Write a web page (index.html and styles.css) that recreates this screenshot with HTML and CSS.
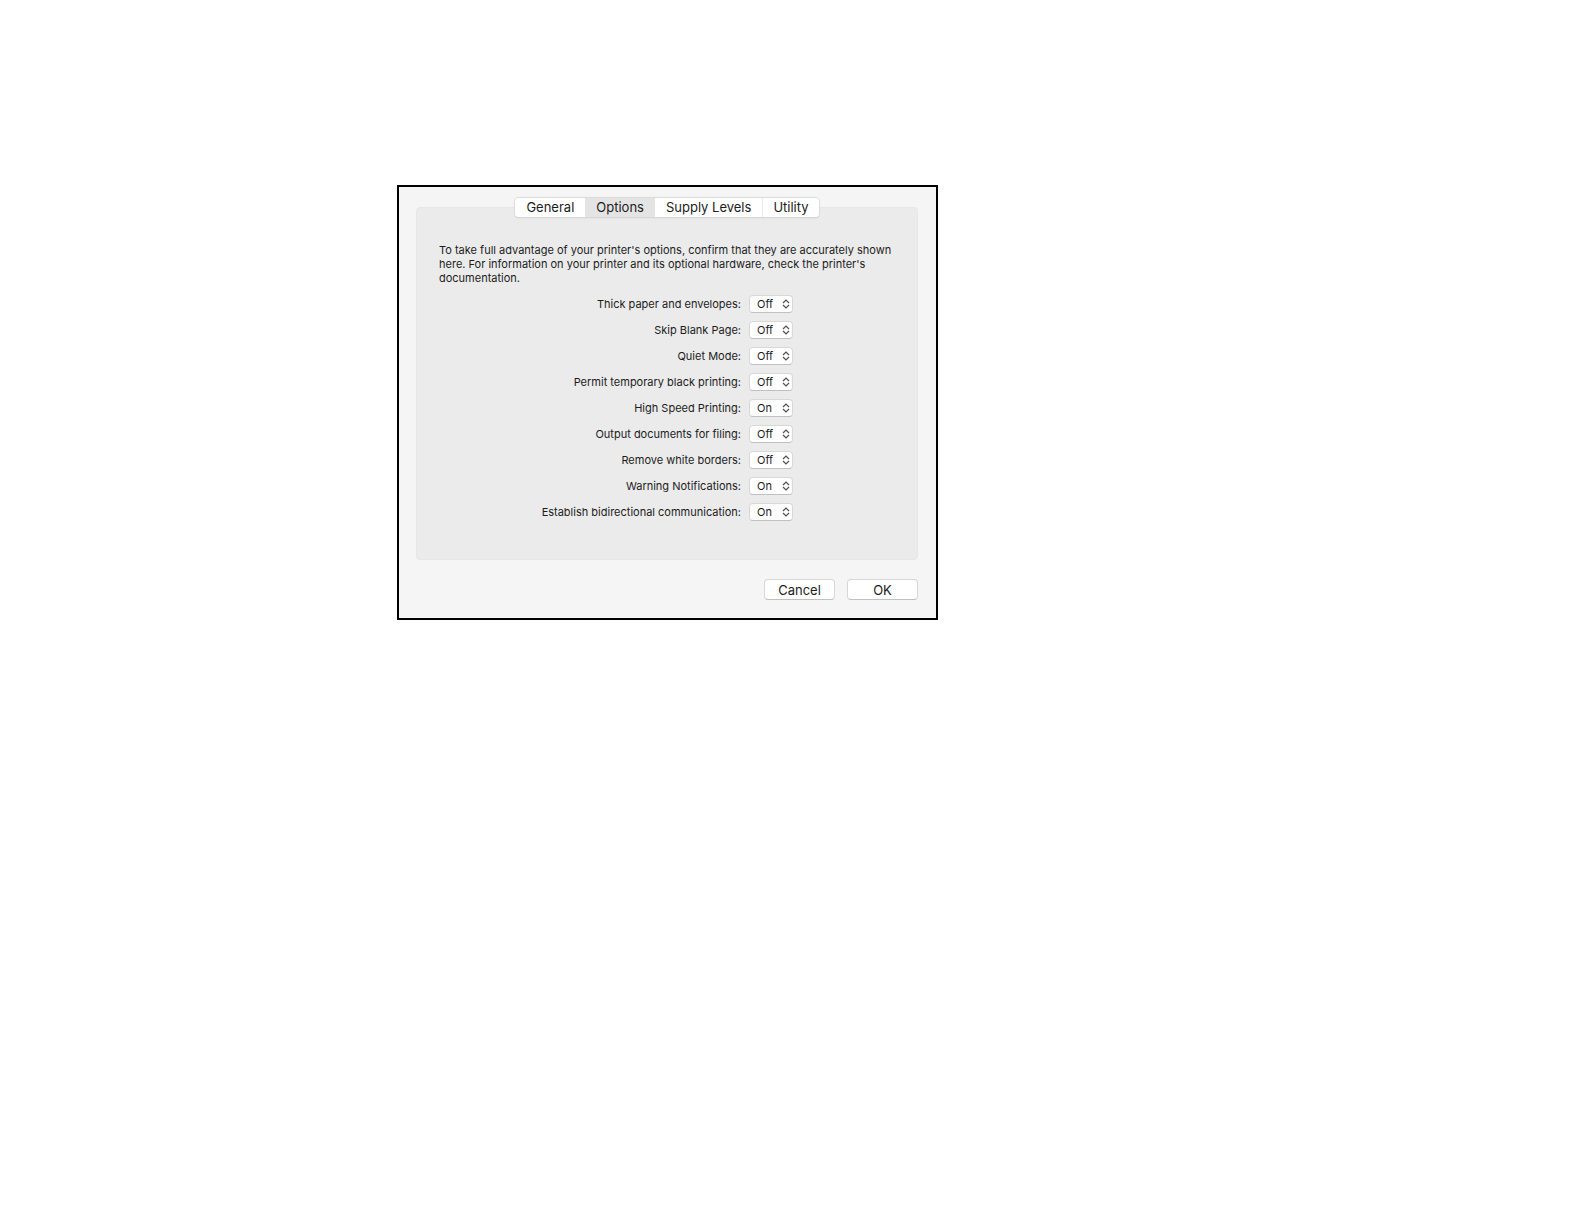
FILE: index.html
```html
<!DOCTYPE html>
<html lang="en">
<head>
    <meta charset="UTF-8">
    <meta name="viewport" content="width=device-width, initial-scale=1.0">
    <title>Printer Options</title>
    <link rel="stylesheet" href="styles.css">
</head>
<body>
    <!-- Up/down arrows shared by all the pop-up menus -->
    <svg class="symbols" aria-hidden="true">
        <symbol id="arrows" viewBox="0 0 8 10">
            <path d="M1 4 L4 1 L7 4 M1 6 L4 9 L7 6" />
        </symbol>
    </svg>

    <main class="dialog">
        <div class="tabs" role="tablist">
            <button class="tab" type="button" role="tab">General</button>
            <button class="tab active" type="button" role="tab" aria-selected="true">Options</button>
            <button class="tab" type="button" role="tab">Supply Levels</button>
            <button class="tab" type="button" role="tab">Utility</button>
        </div>
        <section class="panel">
            <p class="intro">To take full advantage of your printer's options, confirm that they are accurately shown here. For information on your printer and its optional hardware, check the printer's documentation.</p>
            <div class="options">
                <div class="option">
                    <label for="thick-paper">Thick paper and envelopes:</label>
                    <div class="popup">
                        <select id="thick-paper"><option selected>Off</option><option>On</option></select>
                        <svg class="arrows"><use href="#arrows" /></svg>
                    </div>
                </div>
                <div class="option">
                    <label for="skip-blank">Skip Blank Page:</label>
                    <div class="popup">
                        <select id="skip-blank"><option selected>Off</option><option>On</option></select>
                        <svg class="arrows"><use href="#arrows" /></svg>
                    </div>
                </div>
                <div class="option">
                    <label for="quiet-mode">Quiet Mode:</label>
                    <div class="popup">
                        <select id="quiet-mode"><option selected>Off</option><option>On</option></select>
                        <svg class="arrows"><use href="#arrows" /></svg>
                    </div>
                </div>
                <div class="option">
                    <label for="black-printing">Permit temporary black printing:</label>
                    <div class="popup">
                        <select id="black-printing"><option selected>Off</option><option>On</option></select>
                        <svg class="arrows"><use href="#arrows" /></svg>
                    </div>
                </div>
                <div class="option">
                    <label for="high-speed">High Speed Printing:</label>
                    <div class="popup">
                        <select id="high-speed"><option>Off</option><option selected>On</option></select>
                        <svg class="arrows"><use href="#arrows" /></svg>
                    </div>
                </div>
                <div class="option">
                    <label for="filing">Output documents for filing:</label>
                    <div class="popup">
                        <select id="filing"><option selected>Off</option><option>On</option></select>
                        <svg class="arrows"><use href="#arrows" /></svg>
                    </div>
                </div>
                <div class="option">
                    <label for="white-borders">Remove white borders:</label>
                    <div class="popup">
                        <select id="white-borders"><option selected>Off</option><option>On</option></select>
                        <svg class="arrows"><use href="#arrows" /></svg>
                    </div>
                </div>
                <div class="option">
                    <label for="warnings">Warning Notifications:</label>
                    <div class="popup">
                        <select id="warnings"><option>Off</option><option selected>On</option></select>
                        <svg class="arrows"><use href="#arrows" /></svg>
                    </div>
                </div>
                <div class="option">
                    <label for="bidirectional">Establish bidirectional communication:</label>
                    <div class="popup">
                        <select id="bidirectional"><option>Off</option><option selected>On</option></select>
                        <svg class="arrows"><use href="#arrows" /></svg>
                    </div>
                </div>
            </div>
        </section>
        <div class="actions">
            <button class="btn" type="button">Cancel</button>
            <button class="btn" type="button">OK</button>
        </div>
    </main>
</body>
</html>
```
FILE: styles.css
```css
* {
    box-sizing: border-box;
}

body {
    margin: 0;
    padding: 185px 0 0 397px;
    background-color: #fff;
    color: #1c1c1c;
    font-family: Inter, "Liberation Sans", sans-serif;
    font-size: 11px;
    line-height: 14px;
}

button,
select {
    font-family: inherit;
    color: inherit;
}

.symbols {
    position: absolute;
    width: 0;
    height: 0;
}

.dialog {
    max-width: 541px;
    padding: 11px 18px 18px 17px;
    border: 2px solid #000;
    background-color: #f5f5f5;
}

/* Segmented tabs sit over the top edge of the panel */
.tabs {
    position: relative;
    display: flex;
    width: fit-content;
    margin: 0 auto -10px;
    border-radius: 4px;
    background-color: #fff;
    box-shadow: 0 0 1px 1px #dadada, 0 1px 1px #b8b8b8;
    overflow: hidden;
}

.tab {
    height: 19px;
    padding: 0 11px;
    border: none;
    background-color: #fff;
    font-size: 13px;
    line-height: 19px;
}

.tab.active {
    background-color: #e4e4e4;
}

.tab:last-child {
    padding: 0 10px;
    border-left: 1px solid #e9e9e9;
}

/* Panel */
.panel {
    padding: 35px 22px 38px;
    border: 1px solid #e7e7e7;
    border-radius: 4px;
    background-color: #ebebeb;
}

.intro {
    margin: 0 0 10px;
}

.options {
    display: flex;
    flex-direction: column;
    gap: 8px;
}

.option {
    display: grid;
    grid-template-columns: 1fr 146px;
    column-gap: 8px;
    align-items: center;
}

.option label {
    text-align: right;
}

/* Pop-up menus */
.popup {
    position: relative;
    width: 44px;
    height: 18px;
}

.popup select {
    appearance: none;
    display: block;
    width: 100%;
    height: 18px;
    padding: 0 0 0 7px;
    border: 1px solid #d8d8d8;
    border-bottom-color: #c0c0c0;
    border-radius: 4px;
    background-color: #fff;
    font-size: 11px;
}

.arrows {
    position: absolute;
    top: 4px;
    right: 3px;
    width: 8px;
    height: 10px;
    fill: none;
    stroke: #505050;
    stroke-width: 1.2;
    pointer-events: none;
}

/* Bottom buttons */
.actions {
    display: flex;
    justify-content: flex-end;
    gap: 12px;
    margin-top: 19px;
}

.btn {
    width: 71px;
    height: 21px;
    padding: 0;
    border: 1px solid #d8d8d8;
    border-bottom-color: #c0c0c0;
    border-radius: 4px;
    background-color: #fff;
    font-size: 13px;
}
```
